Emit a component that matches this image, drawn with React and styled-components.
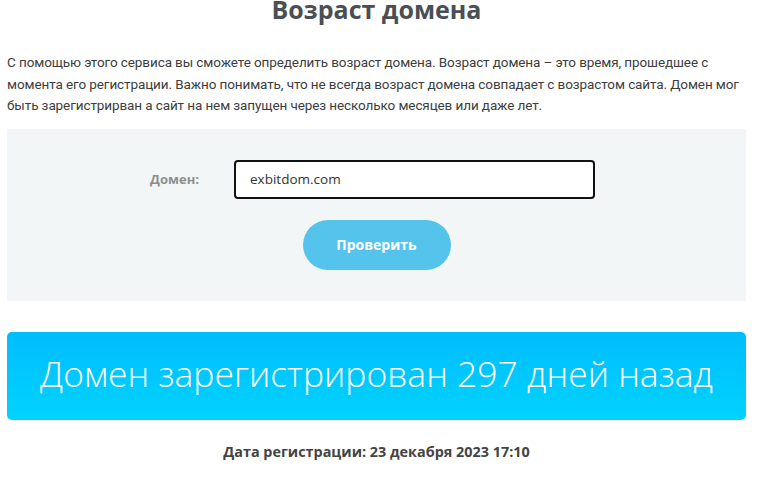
import React from 'react'
import styled, { createGlobalStyle } from 'styled-components'

const GlobalStyle = createGlobalStyle`
  body {
    margin: 0;
    background: #fff;
    font-family: Roboto, "Liberation Sans", sans-serif;
    overflow: hidden;
  }
`

const Page = styled.div`
  width: 739px;
  margin: 0 0 0 7px;
  color: #444;
`

const Title = styled.h1`
  margin: -6px 0 0;
  font-family: "Open Sans", sans-serif;
  font-weight: 700;
  font-size: 25px;
  line-height: 30px;
  color: #4a4f55;
  text-align: center;
`

const Desc = styled.p`
  margin: 28px 0 0;
  font-size: 13.5px;
  line-height: 21.5px;
  letter-spacing: -0.1px;
  color: #3d3d3d;
`

const Panel = styled.div`
  margin-top: 12px;
  background: #f3f6f6;
  height: 172px;
  padding-top: 31px;
  box-sizing: border-box;
  display: flex;
  flex-direction: column;
  align-items: center;
`

const Row = styled.div`
  display: flex;
  align-items: center;
  margin-right: 8px;
`

const Label = styled.label`
  width: 84px;
  font-family: "Open Sans", sans-serif;
  font-weight: 700;
  font-size: 13px;
  color: #8e8e8e;
`

const Input = styled.input`
  width: 361px;
  height: 39px;
  box-sizing: border-box;
  border: 2px solid #111;
  border-radius: 4px;
  padding: 0 14px;
  font-family: "Open Sans", sans-serif;
  font-size: 13.5px;
  color: #333;
  background: #fff;
  outline: none;
`

const Button = styled.button`
  margin-top: 21px;
  width: 148px;
  height: 50px;
  border: none;
  border-radius: 25px;
  background: #55c4ec;
  color: #fff;
  font-family: "Open Sans", sans-serif;
  font-weight: 700;
  font-size: 14px;
  cursor: pointer;
`

const Result = styled.div`
  margin-top: 31px;
  height: 88px;
  padding-bottom: 5px;
  box-sizing: border-box;
  border-radius: 5px;
  background: linear-gradient(180deg, #00bdfd 0%, #00d3ff 100%);
  display: flex;
  align-items: center;
  justify-content: center;
  color: #fff;
  font-family: "Open Sans", sans-serif;
  font-weight: 300;
  font-size: 35.5px;
`

const RegDate = styled.div`
  margin-top: 22px;
  text-align: center;
  font-family: "Open Sans", sans-serif;
  font-weight: 700;
  font-size: 14.4px;
  color: #444;
`

export default function App() {
  return (
    <Page>
      <GlobalStyle />
      <Title>Возраст домена</Title>
      <Desc>
        С помощью этого сервиса вы сможете определить возраст домена. Возраст домена – это время, прошедшее с<br />
        момента его регистрации. Важно понимать, что не всегда возраст домена совпадает с возрастом сайта. Домен мог<br />
        быть зарегистрирван а сайт на нем запущен через несколько месяцев или даже лет.
      </Desc>
      <Panel>
        <Row>
          <Label>Домен:</Label>
          <Input defaultValue="exbitdom.com" />
        </Row>
        <Button>Проверить</Button>
      </Panel>
      <Result>Домен зарегистрирован 297 дней назад</Result>
      <RegDate>Дата регистрации: 23 декабря 2023 17:10</RegDate>
    </Page>
  )
}
